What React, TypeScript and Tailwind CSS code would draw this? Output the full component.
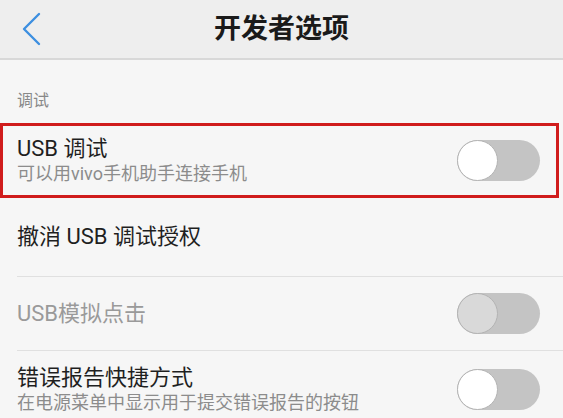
import React from "react";

const font = { fontFamily: 'Roboto, "Noto Sans CJK SC", sans-serif' };

function Toggle({ disabled }: { disabled?: boolean }) {
  return (
    <div className="w-[83px] h-[41px] rounded-full bg-[#c4c4c4] flex items-center shrink-0">
      <div
        className={`w-[41px] h-[41px] rounded-full border-[1.5px] border-[#b3b3b3] ${
          disabled ? "bg-[#d9d9d9]" : "bg-white"
        }`}
      />
    </div>
  );
}

function Row(props: {
  title: string;
  sub?: string;
  toggle?: boolean;
  disabled?: boolean;
  className?: string;
}) {
  const { title, sub, toggle, disabled, className } = props;
  return (
    <div className={`flex items-center justify-between ${className || ""}`}>
      <div className="flex flex-col">
        <div
          className={`text-[22px] leading-[26px] ${
            disabled ? "text-[#9a9a9a]" : "text-[#1f1f1f]"
          }`}
        >
          {title}
        </div>
        {sub && (
          <div className="text-[18px] leading-[24px] text-[#8c8c8c]">{sub}</div>
        )}
      </div>
      {toggle && <Toggle disabled={disabled} />}
    </div>
  );
}

export default function App() {
  return (
    <div className="w-[563px] h-[418px] overflow-hidden bg-[#f6f6f6]" style={font}>
      {/* Header */}
      <div className="h-[60px] bg-[#eeeeee] border-b-2 border-[#d8d8d8] grid grid-cols-[1fr_auto_1fr] items-center">
        <div className="pl-[21px] flex items-center">
          <svg width="22" height="34" viewBox="0 0 22 34" fill="none">
            <polyline
              points="18,2 3,17 18,32"
              stroke="#3d8fe0"
              strokeWidth="2.4"
              strokeLinecap="round"
              strokeLinejoin="round"
            />
          </svg>
        </div>
        <div className="text-[27px] font-bold text-[#1a1a1a] leading-none">开发者选项</div>
        <div />
      </div>

      {/* Section label */}
      <div className="h-[63px] flex items-end pb-[12px] pl-[17px] text-[16px] leading-[20px] text-[#888888]">
        调试
      </div>

      {/* Highlighted row */}
      <div className="mr-[4px] h-[75px] border-[3px] border-[#d01c1c] pl-[14px] pr-[16px] flex flex-col justify-center">
        <Row title="USB 调试" sub="可以用vivo手机助手连接手机" toggle />
      </div>

      <Row title="撤消 USB 调试授权" className="h-[78px] pl-[17px] pr-[22px]" />
      <div className="ml-[17px] h-px bg-[#e0e0e0]" />

      <Row title="USB模拟点击" toggle disabled className="h-[73px] pl-[17px] pr-[23px]" />
      <div className="ml-[17px] h-px bg-[#e0e0e0]" />

      <Row
        title="错误报告快捷方式"
        sub="在电源菜单中显示用于提交错误报告的按钮"
        toggle
        className="h-[77px] pl-[17px] pr-[23px]"
      />
    </div>
  );
}
